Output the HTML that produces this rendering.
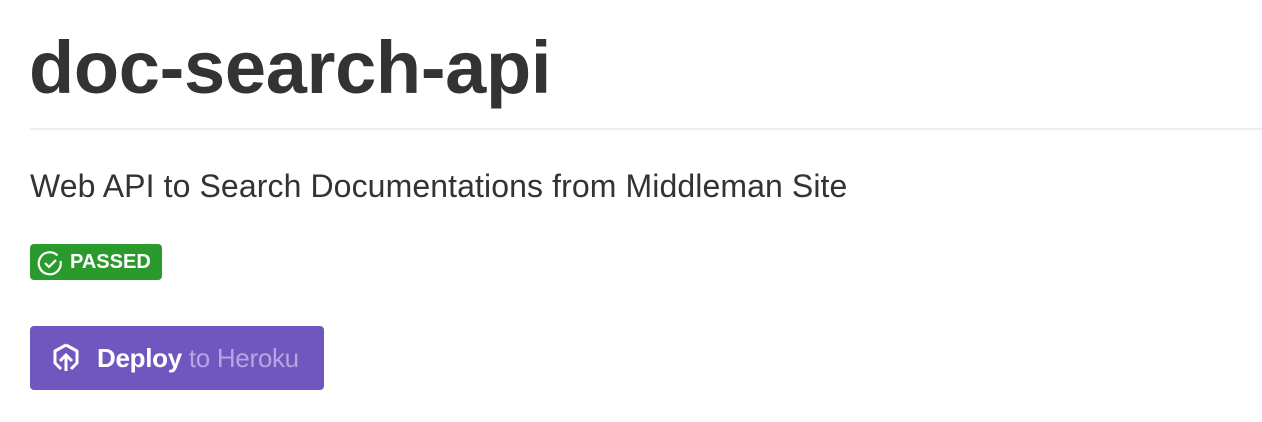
<!DOCTYPE html>
<html><head><style>
body{margin:0;background:#fff;font-family:"Liberation Sans",Helvetica,Arial,sans-serif;color:#333;width:1262px;height:422px;overflow:hidden;position:relative}
h1{position:absolute;left:29px;top:26px;margin:0;font-size:74px;font-weight:bold;line-height:84px;letter-spacing:-0.3px}
.hr{position:absolute;left:30px;top:128px;width:1232px;height:2px;background:#eee}
p{position:absolute;left:30px;top:167px;margin:0;font-size:32px;line-height:38px;letter-spacing:0.1px}
.badge{position:absolute;left:30px;top:244px;width:132px;height:36px;background:#2a9a2c;border-radius:4px;color:#fff;font-weight:bold;font-size:20px}
.badge span{position:absolute;left:40px;top:7px}
.btn{position:absolute;left:30px;top:326px;width:294px;height:64px;background:#7056bf;border-radius:4px;font-weight:bold;font-size:26px}
.btn span{position:absolute;left:67px;top:17px;color:#fff;letter-spacing:-0.3px}
.btn span i{font-style:normal;color:#b5a6e0;font-weight:normal}
</style></head><body>
<h1>doc-search-api</h1>
<div class="hr"></div>
<p>Web API to Search Documentations from Middleman Site</p>
<div class="badge"><svg style="position:absolute;left:7px;top:6px" width="26" height="26" viewBox="0 0 26 26"><path d="M20.5 5.5A11 11 0 1 0 23.5 11" fill="none" stroke="#fff" stroke-width="2.2"/><path d="M8 13l4 4 7-7" fill="none" stroke="#fff" stroke-width="2.2"/></svg><span>PASSED</span></div>
<div class="btn"><svg style="position:absolute;left:20px;top:16px" width="32" height="32" viewBox="0 0 32 32"><path d="M16 3L27 9v12l-6 6M16 3L5 9v12l6 6" fill="none" stroke="#fff" stroke-width="3" stroke-linejoin="round"/><path d="M16 29V14M10 19l6-6 6 6" fill="none" stroke="#fff" stroke-width="3"/></svg><span>Deploy <i>to Heroku</i></span></div>
</body></html>
